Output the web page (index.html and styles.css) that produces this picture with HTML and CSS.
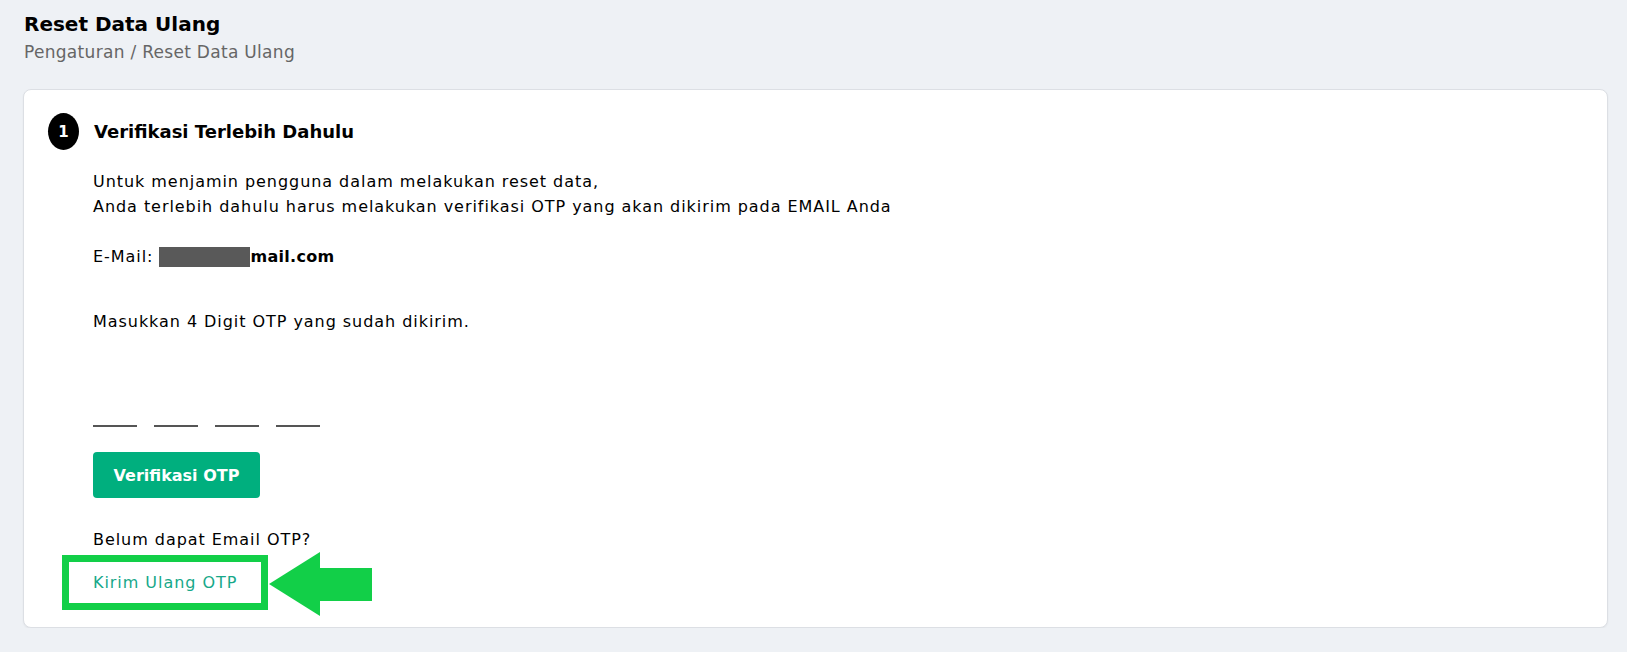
FILE: index.html
```html
<!DOCTYPE html>

<html>

<head>
    <link rel="stylesheet" href="styles.css">
</head>

<body>
    <div class="page-header">
        <h1 class="page-title">Reset Data Ulang</h1>
        <div class="breadcrumb">Pengaturan / Reset Data Ulang</div>
    </div>

    <div class="card">
        <div class="step">
            <div class="step-number">1</div>
            <div class="step-title">Verifikasi Terlebih Dahulu</div>
        </div>

        <div class="step-body">
            <p class="intro">
                Untuk menjamin pengguna dalam melakukan reset data,<br>
                Anda terlebih dahulu harus melakukan verifikasi OTP yang akan dikirim pada EMAIL Anda
            </p>

            <p class="email">E-Mail: <span class="masked"></span><b>mail.com</b></p>

            <p class="otp-label">Masukkan 4 Digit OTP yang sudah dikirim.</p>

            <div class="otp-inputs">
                <input type="text" maxlength="1">
                <input type="text" maxlength="1">
                <input type="text" maxlength="1">
                <input type="text" maxlength="1">
            </div>

            <button class="btn-verify">Verifikasi OTP</button>

            <p class="resend-label">Belum dapat Email OTP?</p>
            <div class="resend-box">
                <a href="#" class="resend-link">Kirim Ulang OTP</a>
                <!-- annotation arrow -->
                <svg class="arrow" width="104" height="66" viewBox="0 0 104 66">
                    <polygon points="1,33 52,1 52,17 104,17 104,50 52,50 52,65" fill="#12cf48" />
                </svg>
            </div>
        </div>
    </div>
</body>

</html>
```

FILE: styles.css
```css
/* General Styling */
body {
    margin: 0;
    padding: 0 19px 0 23px;
    font-family: "DejaVu Sans", Arial, sans-serif;
    background-color: #eef1f5;
    color: #000;
}

.page-header {
    padding: 11px 0 0 1px;
    height: 89px;
    box-sizing: border-box;
}

.page-title {
    margin: 0;
    font-size: 20px;
    font-weight: 600;
    line-height: 26px;
}

.breadcrumb {
    margin-top: 4px;
    font-size: 17px;
    letter-spacing: 0.3px;
    color: #666;
    line-height: 22px;
}

/* Card */
.card {
    background: #fff;
    border: 1px solid #dcdfe4;
    border-radius: 8px;
    box-shadow: 0 1px 2px rgba(0, 0, 0, 0.05);
    padding: 23px 24px 19px 24px;
    box-sizing: border-box;
    height: 539px;
}

.step {
    display: flex;
    align-items: center;
    gap: 15px;
}

.step-number {
    width: 31px;
    height: 37px;
    border-radius: 50%;
    background: #000;
    color: #fff;
    font-weight: bold;
    font-size: 15px;
    display: flex;
    align-items: center;
    justify-content: center;
}

.step-title {
    font-size: 18px;
    font-weight: 600;
}

.step-body {
    padding-left: 45px;
    font-size: 16px;
    letter-spacing: 0.95px;
}

.step-body p {
    margin: 0;
}

.step-body b {
    letter-spacing: 0.3px;
}

.intro {
    margin-top: 19px !important;
    line-height: 25px;
}

.email {
    margin-top: 25px !important;
    line-height: 25px;
    display: flex;
    align-items: center;
}

.masked {
    display: inline-block;
    width: 91px;
    height: 20px;
    background: #595959;
    margin-left: 6px;
}

.otp-label {
    margin-top: 40px !important;
    line-height: 25px;
}

.otp-inputs {
    display: flex;
    gap: 17px;
    margin-top: 67px;
}

.otp-inputs input {
    width: 44px;
    height: 24px;
    border: none;
    border-bottom: 2px solid #555;
    outline: none;
    padding: 0;
    font-size: 16px;
    text-align: center;
    background: transparent;
}

.btn-verify {
    display: block;
    margin-top: 25px;
    width: 167px;
    height: 46px;
    border: none;
    border-radius: 4px;
    background: #00af7e;
    color: #fff;
    font-family: inherit;
    font-size: 16px;
    font-weight: bold;
    letter-spacing: 0;
    cursor: pointer;
}

.resend-label {
    margin-top: 29px !important;
    line-height: 25px;
}

/* Highlighted resend link */
.resend-box {
    position: relative;
    margin-top: 3px;
    margin-left: -31px;
    width: 206px;
    height: 55px;
    border: 7px solid #12cf48;
    box-sizing: border-box;
    padding-left: 24px;
    display: flex;
    align-items: center;
}

.resend-link {
    color: #17a889;
    text-decoration: none;
    font-size: 16px;
}

.arrow {
    position: absolute;
    left: 199px;
    top: -11px;
}
```
